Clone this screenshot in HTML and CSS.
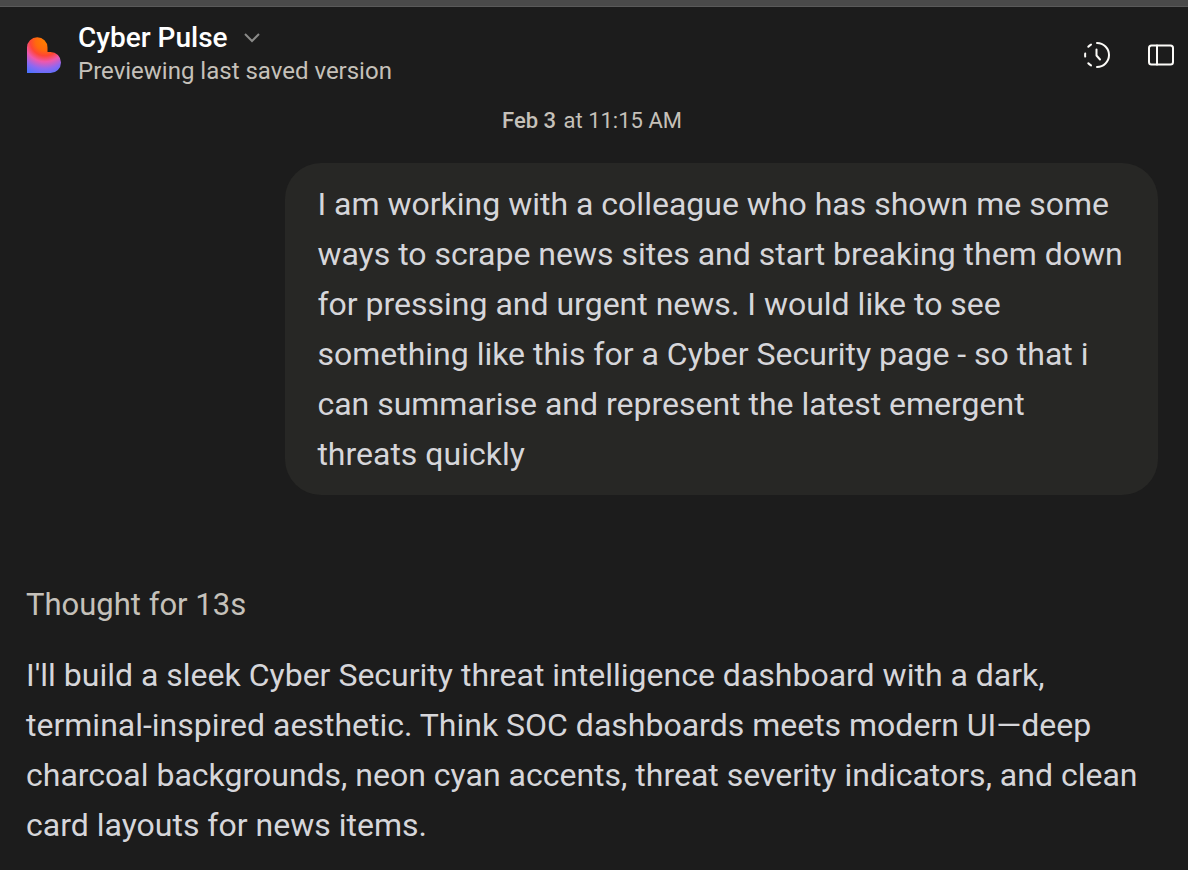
FILE: index.html
```html
<!DOCTYPE html>
<html lang="en">
<head>
    <meta charset="UTF-8">
    <meta name="viewport" content="width=device-width, initial-scale=1.0">
    <title>Cyber Pulse</title>
    <link rel="stylesheet" href="styles.css">
</head>
<body>

    <div class="window-edge"></div>

    <header class="header">
        <svg class="logo" viewBox="0 0 34 36" aria-hidden="true">
            <defs>
                <radialGradient id="logo-gradient" gradientUnits="userSpaceOnUse" cx="18" cy="4" r="37">
                    <stop offset="0" stop-color="#ff7e00"/>
                    <stop offset="0.25" stop-color="#ff6a0c"/>
                    <stop offset="0.4" stop-color="#fe4635"/>
                    <stop offset="0.56" stop-color="#ee58ae"/>
                    <stop offset="0.75" stop-color="#8d68f2"/>
                    <stop offset="0.95" stop-color="#4b73ff"/>
                </radialGradient>
            </defs>
            <path fill="url(#logo-gradient)" d="M0 36V10.500a10.250 10.250 0 0 1 20.500 0V15h3a10.500 10.500 0 0 1 0 21Z"/>
        </svg>

        <div class="project">
            <button class="project-name" type="button">
                Cyber Pulse
                <svg class="chevron" viewBox="0 0 16 10" aria-hidden="true">
                    <path d="M1 1l7 7 7-7"/>
                </svg>
            </button>
            <p class="project-status">Previewing last saved version</p>
        </div>

        <div class="actions">
            <button class="icon-button" type="button" aria-label="History">
                <svg viewBox="0 0 28 28" aria-hidden="true">
                    <path d="M14 2a12 12 0 0 1 0 24M8 3.600a12 12 0 0 0-2.700 2.200M2.200 12.500a12 12 0 0 0 0 3M5.300 22.200a12 12 0 0 0 2.700 2.200M13.500 8.500v6l3.500 4"/>
                </svg>
            </button>
            <button class="icon-button" type="button" aria-label="Toggle sidebar">
                <svg viewBox="0 0 28 28" aria-hidden="true">
                    <rect x="2" y="4.500" width="24" height="19" rx="2.500"/>
                    <path d="M10 4.500v19"/>
                </svg>
            </button>
        </div>
    </header>

    <main class="chat">
        <p class="timestamp"><span class="timestamp-day">Feb 3</span> at 11:15 AM</p>

        <div class="user-message">
            I am working with a colleague who has shown me some ways to scrape news sites and start breaking them down for pressing and urgent news. I would like to see something like this for a Cyber Security page - so that i can summarise and represent the latest emergent threats quickly
        </div>

        <div class="reply">
            <p class="thought">Thought for 13s</p>
            <p>I'll build a sleek Cyber Security threat intelligence dashboard with a dark, terminal-inspired aesthetic. Think SOC dashboards meets modern UI—deep charcoal backgrounds, neon cyan accents, threat severity indicators, and clean card layouts for news items.</p>
        </div>
    </main>

</body>
</html>
```
FILE: styles.css
```css
* {
    margin: 0;
    padding: 0;
    box-sizing: border-box;
}

body {
    font-family: Roboto, sans-serif;
    background-color: #1c1c1c;
    color: #d6d6da;
}

button {
    font: inherit;
    color: inherit;
    background: none;
    border: none;
    cursor: pointer;
}

.window-edge {
    height: 7px;
    background-color: #4a4a4a;
    border-bottom: 1px solid #5a5a5a;
}

/* Header */
.header {
    display: flex;
    align-items: center;
    gap: 17px;
    height: 96px;
    padding: 0 13px 0 27px;
}

.logo {
    width: 34px;
    height: 36px;
}

.project {
    flex: 1;
    padding-bottom: 2px;
}

.project-name {
    display: flex;
    align-items: center;
    gap: 16px;
    font-size: 28px;
    font-weight: 500;
    line-height: 34px;
    color: #fff;
}

.chevron {
    width: 16px;
    height: 10px;
    fill: none;
    stroke: #8a8a88;
    stroke-width: 2;
}

.project-status {
    font-size: 24px;
    line-height: 32px;
    color: #c5c1ba;
}

.actions {
    display: flex;
    gap: 36px;
}

.icon-button {
    width: 28px;
    height: 28px;
}

.icon-button svg {
    display: block;
    width: 28px;
    height: 28px;
    fill: none;
    stroke: #fcfbf8;
    stroke-width: 2;
    stroke-linecap: round;
    stroke-linejoin: round;
}

/* Conversation */
.chat {
    display: flex;
    flex-direction: column;
    padding: 0 30px 20px 26px;
    font-size: 32px;
    line-height: 50px;
}

.timestamp {
    margin-bottom: 24px;
    font-size: 22px;
    line-height: 36px;
    text-align: center;
    color: #c5c1ba;
}

.timestamp-day {
    margin-right: 2px;
    font-weight: 500;
}

.user-message {
    align-self: flex-end;
    width: calc(77% + 1px);
    padding: 16px 32px;
    background-color: #272725;
    border-radius: 36px;
}

.reply {
    margin-top: 85px;
}

.thought {
    margin-bottom: 20px;
    font-size: 31px;
    color: #c5c1ba;
}
```
